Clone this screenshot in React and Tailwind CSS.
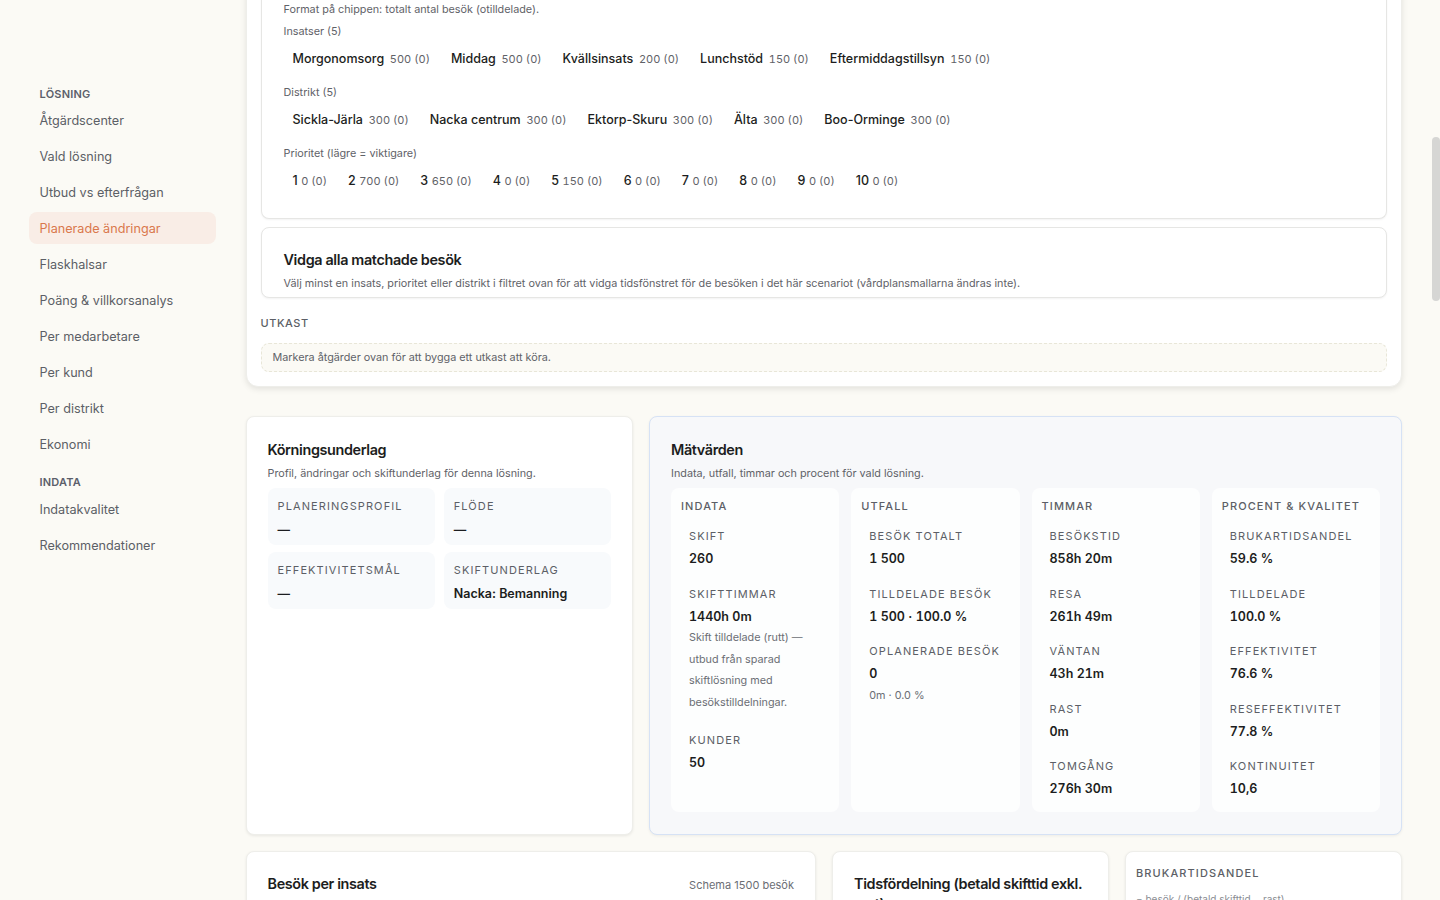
const nav1 = ["Åtgärdscenter", "Vald lösning", "Utbud vs efterfrågan", "Planerade ändringar", "Flaskhalsar", "Poäng & villkorsanalys", "Per medarbetare", "Per kund", "Per distrikt", "Ekonomi"];
const nav2 = ["Indatakvalitet", "Rekommendationer"];

const insatser = [["Morgonomsorg", "500 (0)"], ["Middag", "500 (0)"], ["Kvällsinsats", "200 (0)"], ["Lunchstöd", "150 (0)"], ["Eftermiddagstillsyn", "150 (0)"]];
const distrikt = [["Sickla-Järla", "300 (0)"], ["Nacka centrum", "300 (0)"], ["Ektorp-Skuru", "300 (0)"], ["Älta", "300 (0)"], ["Boo-Orminge", "300 (0)"]];
const prioritet = [["1", "0 (0)"], ["2", "700 (0)"], ["3", "650 (0)"], ["4", "0 (0)"], ["5", "150 (0)"], ["6", "0 (0)"], ["7", "0 (0)"], ["8", "0 (0)"], ["9", "0 (0)"], ["10", "0 (0)"]];

const metrics = [
  { title: "INDATA", items: [
    { label: "SKIFT", value: "260" },
    { label: "SKIFTTIMMAR", value: "1440h 0m", note: "Skift tilldelade (rutt) — utbud från sparad skiftlösning med besökstilldelningar." },
    { label: "KUNDER", value: "50" },
  ] },
  { title: "UTFALL", items: [
    { label: "BESÖK TOTALT", value: "1 500" },
    { label: "TILLDELADE BESÖK", value: "1 500 · 100.0 %" },
    { label: "OPLANERADE BESÖK", value: "0", note: "0m · 0.0 %" },
  ] },
  { title: "TIMMAR", items: [
    { label: "BESÖKSTID", value: "858h 20m" },
    { label: "RESA", value: "261h 49m" },
    { label: "VÄNTAN", value: "43h 21m" },
    { label: "RAST", value: "0m" },
    { label: "TOMGÅNG", value: "276h 30m" },
  ] },
  { title: "PROCENT & KVALITET", items: [
    { label: "BRUKARTIDSANDEL", value: "59.6 %" },
    { label: "TILLDELADE", value: "100.0 %" },
    { label: "EFFEKTIVITET", value: "76.6 %" },
    { label: "RESEFFEKTIVITET", value: "77.8 %" },
    { label: "KONTINUITET", value: "10,6" },
  ] },
];

const NavItem = ({ label, active }) => (
  <div className={`h-8 px-[10.5px] pt-[2px] flex items-center rounded-lg text-[12.65px] ${active ? "bg-[#f9ede6] text-[#d9784c]" : "text-[#5c5f66]"}`}>
    {label}
  </div>
);

const ChipRow = ({ title, chips, tight }) => (
  <div>
    <div className="text-[10.8px] leading-[16px] text-[#5f6268]">{title}</div>
    <div className="flex gap-[3px] mt-[5px] h-[28px] items-center">
      {chips.map(([name, count]) => (
        <div key={name} className={`px-[9px] flex items-center whitespace-nowrap ${tight ? "gap-[3.5px]" : "gap-[5.7px]"}`}>
          <span className="text-[12.5px] font-medium text-[#1c1d20]">{name}</span>
          <span className="text-[11px] tabular-nums text-[#5f6268]">{count}</span>
        </div>
      ))}
    </div>
  </div>
);

const InfoTile = ({ label, value }) => (
  <div className="h-[57px] rounded-lg bg-[#f8fafc] px-[10px] pt-[11px]">
    <div className="text-[11px] leading-[14px] tracking-[0.1em] text-[#5c5f66]">{label}</div>
    <div className="mt-2 text-[12.5px] leading-[18px] font-semibold text-[#1c1d20]">{value}</div>
  </div>
);

const MetricItem = ({ label, value, note }) => (
  <div className="px-2 pb-[17.5px] last:pb-0">
    <div className="text-[11px] leading-[14px] tracking-[0.1em] text-[#5c5f66]">{label}</div>
    <div className="mt-[6px] text-[12.5px] leading-[20px] font-semibold tabular-nums text-[#1c1d20]">{value}</div>
    {note && <div className="text-[10.8px] leading-[21.6px] mt-[0.5px] mb-[2px] text-[#6b6e75]">{note}</div>}
  </div>
);

export default function App() {
  return (
    <div className="relative h-screen overflow-hidden flex bg-[#fbfaf5] font-['Inter',sans-serif]">
      <aside className="w-[245.5px] shrink-0 pl-[29px] pr-[29.5px] pt-[87px]">
        <div className="px-[10.5px] text-[11px] leading-[14px] font-semibold tracking-[0.02em] text-[#5c5f6b]">LÖSNING</div>
        <div className="mt-[3px] flex flex-col gap-1">
          {nav1.map((n) => <NavItem key={n} label={n} active={n === "Planerade ändringar"} />)}
        </div>
        <div className="mt-[15px] px-[10.5px] text-[11px] leading-[14px] font-semibold tracking-[0.02em] text-[#5c5f6b]">INDATA</div>
        <div className="mt-[4px] flex flex-col gap-1">
          {nav2.map((n) => <NavItem key={n} label={n} />)}
        </div>
      </aside>

      <main className="flex-1 min-w-0 pr-[38px]">
        <section className="-mt-[40px] bg-white rounded-xl border border-[#eeeeea] shadow-[0_2px_6px_rgba(0,0,0,0.1)] px-[14px] pb-[14px]">
          <div className="h-[258px] bg-white border-b border-x border-[#e6e6e4] rounded-b-lg shadow-[0_1px_2px_rgba(0,0,0,0.05)] px-[22px] pt-[25px]">
            <div className="text-[10.8px] leading-[16px] text-[#5f6268] whitespace-nowrap">Filtrera på insats, distrikt eller prioritet: markera en chip för att begränsa vilka besök som ingår i den här vidgningen, flera val kombineras med och mellan grupperna.</div>
            <div className="text-[10.8px] leading-[16px] text-[#5f6268]">Format på chippen: totalt antal besök (otilldelade).</div>
            <div className="mt-[6px] flex flex-col gap-[12px]">
              <ChipRow title="Insatser (5)" chips={insatser} />
              <ChipRow title="Distrikt (5)" chips={distrikt} />
              <ChipRow title="Prioritet (lägre = viktigare)" chips={prioritet} tight />
            </div>
          </div>

          <div className="mt-2 h-[71px] bg-white border border-[#e6e6e4] rounded-lg shadow-[0_1px_2px_rgba(0,0,0,0.05)] px-[22px] pt-[22px]">
            <h3 className="text-[14.4px] leading-[20px] font-semibold tracking-[-0.025em] text-[#1c1d20]">Vidga alla matchade besök</h3>
            <p className="mt-[6px] text-[10.8px] leading-[16px] text-[#5f6268]">Välj minst en insats, prioritet eller distrikt i filtret ovan för att vidga tidsfönstret för de besöken i det här scenariot (vårdplansmallarna ändras inte).</p>
          </div>

          <div className="mt-[18px] text-[11px] leading-[14px] font-medium tracking-[0.05em] text-[#5c5f66]">UTKAST</div>
          <div className="mt-[13px] h-[29px] px-[11px] pt-[1px] flex items-center rounded-lg border border-dashed border-[#e8e6d8] bg-[#fbfaf5] text-[10.8px] text-[#5f6268]">
            Markera åtgärder ovan för att bygga ett utkast att köra.
          </div>
        </section>

        <div className="mt-[29px] grid grid-cols-[387.5px_1fr] gap-4">
          <section className="h-[419px] bg-white rounded-lg border border-[#eeeeea] shadow-[0_1px_3px_rgba(0,0,0,0.08)] px-[21px] pt-[23px]">
            <h3 className="text-[14.4px] leading-[20px] font-semibold tracking-[-0.025em] text-[#1c1d20]">Körningsunderlag</h3>
            <p className="mt-[6px] text-[10.8px] leading-[16px] text-[#5f6268]">Profil, ändringar och skiftunderlag för denna lösning.</p>
            <div className="mt-[6px] grid grid-cols-2 gap-x-[9px] gap-y-[7px]">
              <InfoTile label="PLANERINGSPROFIL" value="—" />
              <InfoTile label="FLÖDE" value="—" />
              <InfoTile label="EFFEKTIVITETSMÅL" value="—" />
              <InfoTile label="SKIFTUNDERLAG" value="Nacka: Bemanning" />
            </div>
          </section>

          <section className="h-[419px] bg-[#f7f8fa] rounded-lg border border-[#d6e2f5] shadow-[0_1px_3px_rgba(0,0,0,0.06)] px-[21px] pt-[23px]">
            <h3 className="text-[14.4px] leading-[20px] font-semibold tracking-[-0.025em] text-[#1c1d20]">Mätvärden</h3>
            <p className="mt-[6px] text-[10.8px] leading-[16px] text-[#5f6268]">Indata, utfall, timmar och procent för vald lösning.</p>
            <div className="mt-[6px] grid grid-cols-4 gap-3 h-[324px]">
              {metrics.map((col) => (
                <div key={col.title} className="rounded-lg bg-white/80 px-[10px] pt-[11px]">
                  <div className="text-[11px] leading-[14px] font-medium tracking-[0.1em] text-[#5c5f66] whitespace-nowrap">{col.title}</div>
                  <div className="mt-[16px]">
                    {col.items.map((it) => <MetricItem key={it.label} {...it} />)}
                  </div>
                </div>
              ))}
            </div>
          </section>
        </div>

        <div className="mt-4 grid grid-cols-[570.5px_277px_1fr] gap-4">
          <section className="h-[200px] bg-white rounded-lg border border-[#eeeeea] shadow-[0_1px_3px_rgba(0,0,0,0.08)] px-[21px] pt-[22px] flex justify-between">
            <h3 className="text-[14.4px] leading-[20px] font-semibold tracking-[-0.025em] text-[#1c1d20]">Besök per insats</h3>
            <span className="text-[11px] leading-[23px] text-[#6b6e75]">Schema 1500 besök</span>
          </section>
          <section className="h-[200px] bg-white rounded-lg border border-[#eeeeea] shadow-[0_1px_3px_rgba(0,0,0,0.08)] px-[21px] pt-[22px]">
            <h3 className="text-[14.4px] leading-[20px] font-semibold tracking-[-0.025em] text-[#1c1d20]">Tidsfördelning (betald skifttid exkl. rast)</h3>
          </section>
          <section className="h-[200px] bg-white rounded-lg border border-[#eeeeea] shadow-[0_1px_3px_rgba(0,0,0,0.08)] px-[10px] pt-[14px]">
            <div className="text-[11px] leading-[14px] font-medium tracking-[0.1em] text-[#5c5f66]">BRUKARTIDSANDEL</div>
            <div className="mt-3 text-[10px] leading-[14px] text-[#8a8d93]">= besök / (betald skifttid − rast)</div>
          </section>
        </div>
      </main>

      <div className="absolute right-0 top-[137px] w-2 h-[164px] rounded-full bg-[#d6d6d4]" />
    </div>
  );
}
